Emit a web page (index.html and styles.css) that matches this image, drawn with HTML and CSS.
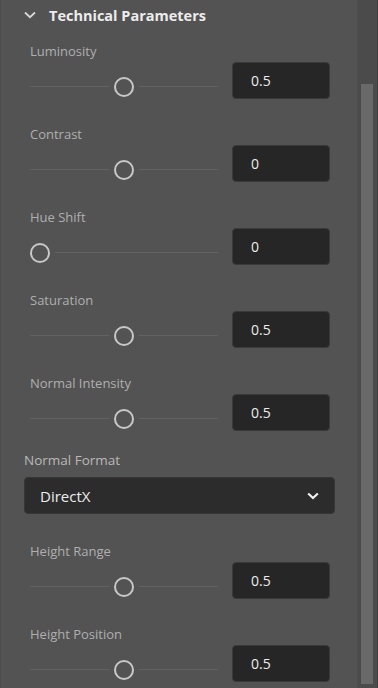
FILE: index.html
```html
<!DOCTYPE html>
<html lang="en">
<head>
    <meta charset="UTF-8">
    <meta name="viewport" content="width=device-width, initial-scale=1.0">
    <title>Technical Parameters</title>
    <link rel="stylesheet" href="styles.css">
</head>
<body>
    <div class="panel">
        <div class="section-head">
            <svg class="chevron" width="12" height="8" viewBox="0 0 12 8">
                <path d="M1 1.5 L6 6.2 L11 1.5" fill="none" stroke="#d8d8d8" stroke-width="1.8"/>
            </svg>
            <span>Technical Parameters</span>
        </div>

        <div class="param">
            <label>Luminosity</label>
            <div class="control">
                <div class="slider"><div class="track"></div><div class="thumb" style="left: 84px"></div></div>
                <div class="value">0.5</div>
            </div>
        </div>

        <div class="param">
            <label>Contrast</label>
            <div class="control">
                <div class="slider"><div class="track"></div><div class="thumb" style="left: 84px"></div></div>
                <div class="value">0</div>
            </div>
        </div>

        <div class="param">
            <label>Hue Shift</label>
            <div class="control">
                <div class="slider"><div class="track"></div><div class="thumb" style="left: 0px"></div></div>
                <div class="value">0</div>
            </div>
        </div>

        <div class="param">
            <label>Saturation</label>
            <div class="control">
                <div class="slider"><div class="track"></div><div class="thumb" style="left: 84px"></div></div>
                <div class="value">0.5</div>
            </div>
        </div>

        <div class="param">
            <label>Normal Intensity</label>
            <div class="control">
                <div class="slider"><div class="track"></div><div class="thumb" style="left: 84px"></div></div>
                <div class="value">0.5</div>
            </div>
        </div>

        <div class="select-group">
            <label>Normal Format</label>
            <div class="select">
                <span>DirectX</span>
                <svg width="12" height="8" viewBox="0 0 12 8">
                    <path d="M1.2 1.5 L6 6 L10.8 1.5" fill="none" stroke="#f0f0f0" stroke-width="2.2"/>
                </svg>
            </div>
        </div>

        <div class="param">
            <label>Height Range</label>
            <div class="control">
                <div class="slider"><div class="track"></div><div class="thumb" style="left: 84px"></div></div>
                <div class="value">0.5</div>
            </div>
        </div>

        <div class="param">
            <label>Height Position</label>
            <div class="control">
                <div class="slider"><div class="track"></div><div class="thumb" style="left: 84px"></div></div>
                <div class="value">0.5</div>
            </div>
        </div>
    </div>

    <div class="scrollbar">
        <div class="scroll-thumb"></div>
    </div>
</body>
</html>
```

FILE: styles.css
```css
body {
    font-family: "Open Sans", "Noto Sans", sans-serif;
    background-color: #535353;
    color: #e8e8e8;
    margin: 0;
    padding: 0;
    display: flex;
    height: 688px;
    overflow: hidden;
}

.panel {
    width: 356px;
    border-left: 1px solid #4c4c4c;
    flex-shrink: 0;
}

.section-head {
    display: flex;
    align-items: center;
    height: 34px;
    padding-left: 23px;
    font-size: 14.5px;
    font-weight: 700;
    color: #ececec;
    margin-top: -2px;
    margin-bottom: 9px;
}

.chevron {
    margin-right: 13px;
}

.param {
    padding-left: 29px;
    margin-bottom: 25px;
}

label {
    display: block;
    height: 20px;
    line-height: 20px;
    font-size: 13px;
    color: #afafaf;
}

.control {
    display: flex;
    align-items: flex-start;
    margin-top: 1px;
}

.slider {
    position: relative;
    width: 188px;
    height: 37px;
    margin-right: 14px;
}

.track {
    position: absolute;
    left: 0;
    right: 0;
    top: 24px;
    height: 1px;
    background-color: #626262;
}

.thumb {
    position: absolute;
    top: 15px;
    width: 16px;
    height: 16px;
    border: 2px solid #c8c8c8;
    border-radius: 50%;
    background-color: #535353;
    box-shadow: 0 0 0 5px #535353;
}

.value {
    width: 78px;
    height: 35px;
    line-height: 35px;
    padding-left: 18px;
    background-color: #262626;
    border: 1px solid #3a3a3a;
    border-radius: 4px;
    font-size: 14px;
    color: #ececec;
}

.select-group {
    padding-left: 23px;
    margin-top: -6px;
    margin-bottom: 27px;
}

.select-group label {
    font-size: 13.5px;
    color: #b8b8b8;
    margin-bottom: 7px;
}

.select {
    display: flex;
    align-items: center;
    justify-content: space-between;
    width: 279px;
    height: 35px;
    padding: 0 15px 0 15px;
    background-color: #2c2c2c;
    border: 1px solid #363636;
    border-radius: 4px;
    font-size: 15px;
    color: #ececec;
}

.scrollbar {
    width: 17px;
    padding: 84px 4px 4px 3px;
    background-color: #4b4b4b;
    border-left: 1px solid #4d4d4d;
    border-right: 1px solid #3e3e3e;
}

.scroll-thumb {
    height: 600px;
    background-color: #696969;
}
```
